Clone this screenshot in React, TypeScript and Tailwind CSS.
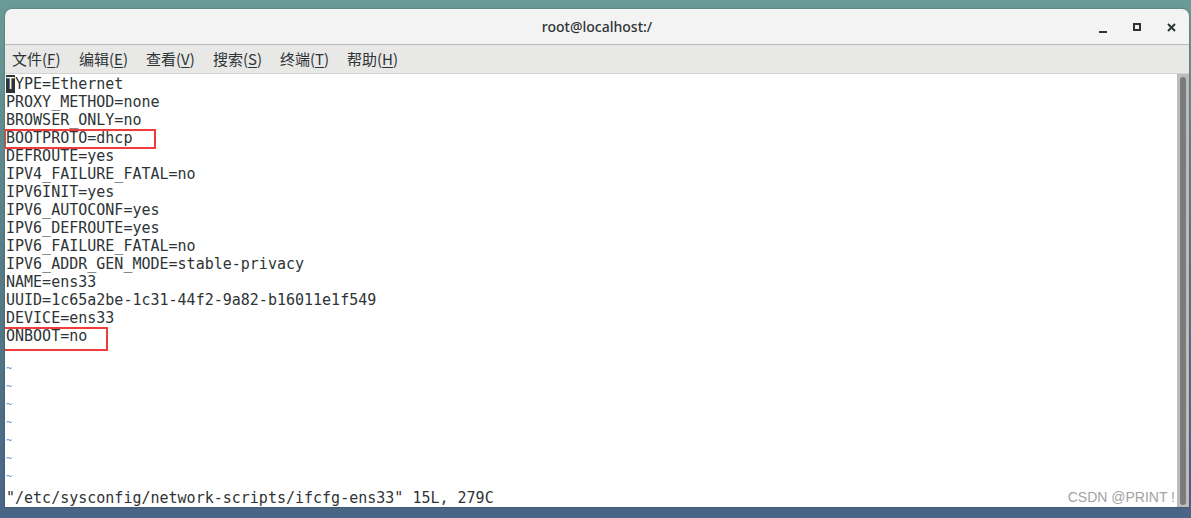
import React from "react";

const lines = [
  "TYPE=Ethernet",
  "PROXY_METHOD=none",
  "BROWSER_ONLY=no",
  "BOOTPROTO=dhcp",
  "DEFROUTE=yes",
  "IPV4_FAILURE_FATAL=no",
  "IPV6INIT=yes",
  "IPV6_AUTOCONF=yes",
  "IPV6_DEFROUTE=yes",
  "IPV6_FAILURE_FATAL=no",
  "IPV6_ADDR_GEN_MODE=stable-privacy",
  "NAME=ens33",
  "UUID=1c65a2be-1c31-44f2-9a82-b16011e1f549",
  "DEVICE=ens33",
  "ONBOOT=no",
];

const menus = [
  { label: "文件", key: "F" },
  { label: "编辑", key: "E" },
  { label: "查看", key: "V" },
  { label: "搜索", key: "S" },
  { label: "终端", key: "T" },
  { label: "帮助", key: "H" },
];

const mono = { fontFamily: '"DejaVu Sans Mono", "Liberation Mono", monospace' };

export default function App() {
  return (
    <div className="w-[1191px] h-[518px] overflow-hidden bg-gradient-to-b from-[#6b9b96] via-[#557d86] to-[#4a6585] pt-[9px] pl-[5px]">
      <div className="w-[1184px] h-[498px] rounded-t-[7px] overflow-hidden flex flex-col shadow-[0_0_2px_rgba(0,0,0,0.4)]">
        {/* title bar */}
        <div className="relative h-[36px] shrink-0 bg-[#f3f3f3] border-b border-[#b9b9b9] flex items-center justify-center">
          <span
            className="text-[14px] text-[#2e3436] font-medium"
            style={{ fontFamily: '"Noto Sans", "Open Sans", sans-serif' }}
          >
            root@localhost:/
          </span>
          <div className="absolute right-[13px] top-[14px] flex items-start gap-[26px]">
            <div className="w-[8px] h-[8px] flex items-end">
              <div className="w-[8px] h-[2px] bg-[#2e3436] translate-y-[2px]" />
            </div>
            <div className="w-[8px] h-[8px] border-2 border-[#2e3436]" />
            <svg width="9" height="9" viewBox="0 0 9 9">
              <path d="M1 1 L8 8 M8 1 L1 8" stroke="#2e3436" strokeWidth="2" />
            </svg>
          </div>
        </div>
        {/* menu bar */}
        <div
          className="h-[29px] shrink-0 bg-[#e8e8e7] border-b border-[#d2d2d2] flex items-center pl-[7px] gap-[16px] text-[15px] text-[#2e3436]"
          style={{ fontFamily: '"Noto Sans CJK SC", "Noto Sans", sans-serif' }}
        >
          {menus.map((m) => (
            <span key={m.key} className="w-[51px] whitespace-nowrap">
              {m.label}(<span className="underline underline-offset-2">{m.key}</span>)
            </span>
          ))}
        </div>
        {/* terminal */}
        <div className="flex-1 flex bg-white">
          <div
            className="relative flex-1 pl-[1px] pt-[1px] text-[15px] leading-[18px] text-[#2e3436]"
            style={mono}
          >
            {lines.map((l, i) => (
              <div key={i} className="h-[18px] whitespace-pre">
                {i === 0 ? (
                  <>
                    <span className="bg-[#2e3436] text-white">T</span>
                    {l.slice(1)}
                  </>
                ) : (
                  l
                )}
              </div>
            ))}
            {Array.from({ length: 8 }).map((_, i) => (
              <div key={"t" + i} className="h-[18px] text-[#5f8fd3] text-[10px] leading-[12px]">
                ~
              </div>
            ))}
            <div className="h-[18px] whitespace-pre">
              "/etc/sysconfig/network-scripts/ifcfg-ens33" 15L, 279C
            </div>

            {/* annotation boxes */}
            <div className="absolute left-[-1px] top-[55px] w-[152px] h-[20px] border-2 border-[#f23b3b]" />
            <div className="absolute left-[-2px] top-[253px] w-[105px] h-[24px] border-2 border-[#f23b3b]" />

            <div
              className="absolute right-[2px] bottom-[2px] text-[14px] leading-[15px] text-[#a3a3a3]"
              style={{ fontFamily: '"Liberation Sans", Arial, sans-serif' }}
            >
              CSDN @PRINT !
            </div>
          </div>
          {/* scrollbar */}
          <div className="w-[12px] shrink-0 bg-[#bcbcbc] pl-[3px] pr-[3px] pt-[3px] pb-[2px]">
            <div className="w-[6px] h-full rounded-[3px] bg-[#7b7b7b]" />
          </div>
        </div>
      </div>
    </div>
  );
}
